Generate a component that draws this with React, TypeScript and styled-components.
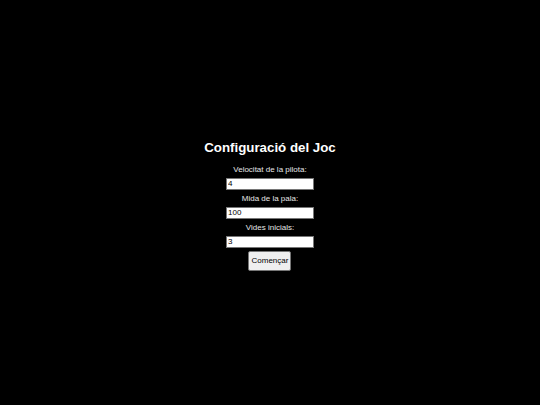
import styled, { createGlobalStyle } from "styled-components";

const GlobalStyle = createGlobalStyle`
  html, body {
    margin: 0;
    padding: 0;
    background: #000;
  }
  body {
    font-family: "Liberation Sans", Arial, sans-serif;
  }
`;

const fields = [
  { label: "Velocitat de la pilota:", value: "4" },
  { label: "Mida de la pala:", value: "100" },
  { label: "Vides inicials:", value: "3" },
];

export default function App() {
  return (
    <>
      <GlobalStyle />
      <Screen>
        <Panel>
          <Title>Configuració del Joc</Title>
          {fields.map((f) => (
            <Field key={f.label}>
              <Label>{f.label}</Label>
              <Input type="text" defaultValue={f.value} />
            </Field>
          ))}
          <StartButton>Començar</StartButton>
        </Panel>
      </Screen>
    </>
  );
}

const Screen = styled.div`
  min-height: 100vh;
  display: flex;
  align-items: center;
  justify-content: center;
  padding-top: 5px;
  box-sizing: border-box;
  color: #fff;
`;

const Panel = styled.div`
  display: flex;
  flex-direction: column;
  align-items: center;
`;

const Title = styled.h1`
  margin: 0 0 9px;
  font-size: 13.3px;
  line-height: 16px;
  font-weight: bold;
`;

const Field = styled.div`
  display: flex;
  flex-direction: column;
  align-items: center;
  gap: 4px;
  margin-bottom: 4px;

  &:last-of-type {
    margin-bottom: 3px;
  }
`;

const Label = styled.label`
  font-size: 8px;
  line-height: 9px;
  color: #e6e6e6;
`;

const Input = styled.input`
  box-sizing: border-box;
  width: 88px;
  height: 12px;
  padding: 0 1px;
  border: 1px solid #767676;
  background: #fff;
  color: #000;
  font-family: "Liberation Sans", Arial, sans-serif;
  font-size: 8px;
  outline: none;
`;

const StartButton = styled.button`
  box-sizing: border-box;
  width: 43px;
  height: 20px;
  padding: 0;
  border: 1px solid #767676;
  border-radius: 2px;
  background: #efefef;
  color: #000;
  font-family: "Liberation Sans", Arial, sans-serif;
  font-size: 8px;
  cursor: pointer;
`;
